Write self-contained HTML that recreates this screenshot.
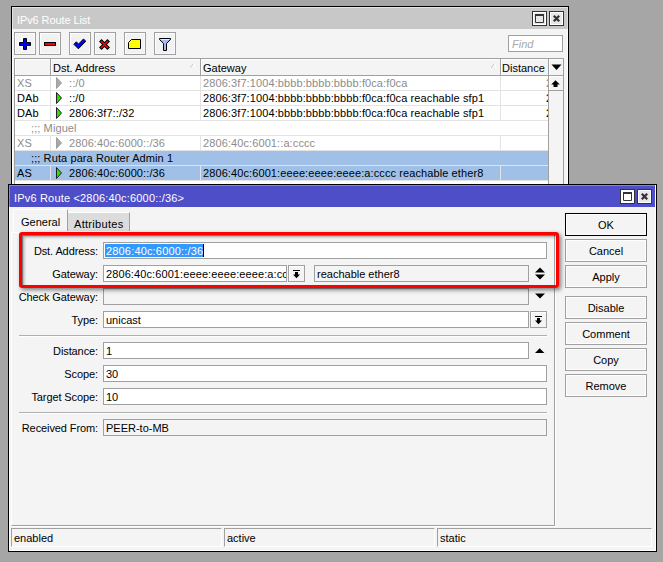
<!DOCTYPE html>
<html><head><meta charset="utf-8">
<style>
*{box-sizing:border-box;margin:0;padding:0}
html,body{width:663px;height:562px;overflow:hidden;background:#a6a6a6}
body{position:relative;font-family:"Liberation Sans",sans-serif;font-size:11px;color:#000}
.a{position:absolute}
.t{position:absolute;white-space:nowrap;line-height:13px}
#w1{left:11px;top:6px;width:558px;height:190px;border:1px solid #000;background:#f4f4f4;box-shadow:inset -1px 0 0 #fff,inset 1px 0 0 #fff}
.tbtn{position:absolute;width:15px;height:15px;border:1px solid #333;background:#e8e6e8;box-shadow:inset 1px 1px 0 #fff,inset -1px -1px 0 #fff}
.tb{position:absolute;top:32px;width:22px;height:23px;border:1px solid #a0a0a0;background:#f2f2f2;box-shadow:inset 1px 1px 0 #fff,inset -1px -1px 0 #fafafa}
.tb svg{position:absolute;left:-1px;top:-1px}
#tbl{left:14px;top:58px;width:550px;height:130px;border:1px solid #a0a0a0;border-bottom:none;border-right:none;background:#fff;overflow:hidden}
.hdr{position:absolute;top:0;height:17px;background:#f4f4f4;box-shadow:inset 1px 1px 0 #fff;border-right:1px solid #a0a0a0;border-bottom:1px solid #a0a0a0}
.row{position:absolute;left:0;width:534px;height:15px;border-bottom:1px solid #e3e3e3;letter-spacing:0.1px}
.cell{position:absolute;top:0;height:15px;border-right:1px solid #e3e3e3}
.gr{color:#8c8c8c}
.sel{background:#a0c0e8}
#w2{left:8px;top:184px;width:649px;height:368px;border:1px solid #000;background:#f4f4f4}
.inp{position:absolute;height:17px;border:1px solid #a0a0a0;background:#fff;overflow:hidden}
.dis{background:#f4f4f4}
.lbl{position:absolute;text-align:right;width:100px;white-space:nowrap;line-height:13px;letter-spacing:-0.1px}
.btn{position:absolute;left:565px;width:82px;height:23px;border:1px solid #a0a0a0;background:#f4f4f4;text-align:center;line-height:23px;box-shadow:inset 1px 1px 0 #fff,inset -1px -1px 0 #fff}
.sep{position:absolute;left:19px;width:528px;height:2px;border-top:1px solid #b0b0b0;border-bottom:1px solid #fff}
.sb{position:absolute;top:528px;height:19px;border-top:1px solid #a0a0a0;border-left:1px solid #a0a0a0;border-right:1px solid #fff;border-bottom:1px solid #fff}
</style></head><body>
<div id="w1" class="a"></div>
<div class="a" style="left:12px;top:7px;width:556px;height:22px;background:#c8c8c8;box-shadow:inset 1px 1px 0 #e4e4e4,inset -1px 0 0 #dcdcdc"></div>
<span class="t" style="left:17px;top:14px;color:#fff;letter-spacing:-0.1px">IPv6 Route List</span>
<div class="tbtn" style="left:532px;top:11px"><svg class="a" style="left:-1px;top:-1px" width="15" height="15"><path d="M3.5 4V11.5H11.5V4" fill="#e8e6e8" stroke="#333"/><rect x="3" y="3" width="9" height="2" fill="#333"/></svg></div>
<div class="tbtn" style="left:549px;top:11px"><svg class="a" style="left:-1px;top:-1px" width="15" height="15"><path d="M4.8 4.8L10.2 10.2M10.2 4.8L4.8 10.2" stroke="#333" stroke-width="2.3"/></svg></div>
<div class="tb" style="left:14px"><svg width="22" height="23"><path d="M8.5 6.5H11.5V10.5H15.5V13.5H11.5V17.5H8.5V13.5H4.5V10.5H8.5Z" fill="#fff" stroke="#fff" stroke-width="3" stroke-linejoin="round"/><path d="M9.5 6.5H12.5V10.5H16.5V13.5H12.5V17.5H9.5V13.5H5.5V10.5H9.5Z" fill="#00f" stroke="#000"/></svg></div>
<div class="tb" style="left:39px"><svg width="22" height="23"><rect x="5.5" y="10.5" width="11" height="3" fill="#f00" stroke="#000"/></svg></div>
<div class="tb" style="left:69px"><svg width="22" height="23"><path d="M4.9 12.3L7.4 9.8L9.4 12.2L14.5 7L16.8 9.2L9.4 16.8Z" fill="#00f" stroke="#000" stroke-width="1" stroke-linejoin="miter"/></svg></div>
<div class="tb" style="left:94px"><svg width="22" height="23"><path d="M6.3 8.3L14.7 16.7M14.7 8.3L6.3 16.7" stroke="#000" stroke-width="3.6"/><path d="M7 9L14 16M14 9L7 16" stroke="#f00" stroke-width="1.7"/></svg></div>
<div class="tb" style="left:124px"><svg width="22" height="23"><path d="M4.5 10.5L7.5 7.5H16.5V16.5H4.5Z" fill="#ff0" stroke="#000"/><path d="M10 9.5h2M13 9.5h2M6 11.5h3M10 11.5h2M13 11.5h2" stroke="#d8d8e8" stroke-width="1"/></svg></div>
<div class="tb" style="left:154px"><svg width="22" height="23"><path d="M5.5 6.5H16.5V7.5L12.5 11.5V18.5H9.5V11.5L5.5 7.5Z" fill="#a8b8f0" stroke="#000"/><path d="M7 7.5H15" stroke="#e8ecff"/></svg></div>
<div class="inp" style="left:508px;top:35px;width:55px;height:17px"><span class="t" style="left:3px;top:2px;color:#a8a8a8;font-style:italic">Find</span></div>
<div id="tbl" class="a"><div class="hdr" style="left:0;width:36px"></div>
<div class="hdr" style="left:36px;width:150px"><span class="t" style="left:2px;top:3px">Dst. Address</span><svg class="a" style="left:138px;top:4px" width="7" height="6"><path d="M0.5 5.5L4 0.5L6.5 5.5" fill="none" stroke="#fff"/><path d="M1 5L4 0.8" stroke="#c8c8c8"/></svg></div>
<div class="hdr" style="left:186px;width:300px"><span class="t" style="left:2px;top:3px">Gateway</span><svg class="a" style="left:289px;top:4px" width="7" height="6"><path d="M0.5 5.5L4 0.5L6.5 5.5" fill="none" stroke="#fff"/><path d="M1 5L4 0.8" stroke="#c8c8c8"/></svg></div>
<div class="hdr" style="left:486px;width:48px"><span class="t" style="left:1px;top:3px">Distance</span></div>
<div class="hdr" style="left:534px;width:15px"><svg class="a" style="left:2px;top:5px" width="11" height="7"><path d="M0.5 0.5H10.5L5.5 6z" fill="#000"/></svg></div>
<div class="row gr" style="top:17px"><div class="cell" style="left:0;width:36px"><span class="t" style="left:2px;top:1px">XS</span></div><div class="cell" style="left:36px;width:150px"><svg class="a" style="left:0;top:0" width="14" height="15"><path d="M5.5 1.5L10.5 7L5.5 12.5Z" fill="#a8a8a8" stroke="#a0a0a0"/></svg><span class="t" style="left:18px;top:1px">::/0</span></div><div class="cell" style="left:186px;width:300px;overflow:hidden"><span class="t" style="left:2px;top:1px">2806:3f7:1004:bbbb:bbbb:bbbb:f0ca:f0ca</span></div><div class="cell" style="left:486px;width:48px;overflow:hidden"><span class="t" style="left:45px;top:1px">2</span></div></div>
<div class="row" style="top:32px"><div class="cell" style="left:0;width:36px"><span class="t" style="left:2px;top:1px">DAb</span></div><div class="cell" style="left:36px;width:150px"><svg class="a" style="left:0;top:0" width="14" height="15"><path d="M5.5 1.5L10.5 7L5.5 12.5Z" fill="#33dd00" stroke="#222"/></svg><span class="t" style="left:18px;top:1px">::/0</span></div><div class="cell" style="left:186px;width:300px;overflow:hidden"><span class="t" style="left:2px;top:1px">2806:3f7:1004:bbbb:bbbb:bbbb:f0ca:f0ca reachable sfp1</span></div><div class="cell" style="left:486px;width:48px;overflow:hidden"><span class="t" style="left:45px;top:1px">2</span></div></div>
<div class="row" style="top:47px"><div class="cell" style="left:0;width:36px"><span class="t" style="left:2px;top:1px">DAb</span></div><div class="cell" style="left:36px;width:150px"><svg class="a" style="left:0;top:0" width="14" height="15"><path d="M5.5 1.5L10.5 7L5.5 12.5Z" fill="#33dd00" stroke="#222"/></svg><span class="t" style="left:18px;top:1px">2806:3f7::/32</span></div><div class="cell" style="left:186px;width:300px;overflow:hidden"><span class="t" style="left:2px;top:1px">2806:3f7:1004:bbbb:bbbb:bbbb:f0ca:f0ca reachable sfp1</span></div><div class="cell" style="left:486px;width:48px;overflow:hidden"><span class="t" style="left:45px;top:1px">2</span></div></div>
<div class="row gr" style="top:62px"><span class="t" style="left:16px;top:1px">;;; Miguel</span></div>
<div class="row gr" style="top:77px"><div class="cell" style="left:0;width:36px"><span class="t" style="left:2px;top:1px">XS</span></div><div class="cell" style="left:36px;width:150px"><svg class="a" style="left:0;top:0" width="14" height="15"><path d="M5.5 1.5L10.5 7L5.5 12.5Z" fill="#a8a8a8" stroke="#a0a0a0"/></svg><span class="t" style="left:18px;top:1px">2806:40c:6000::/36</span></div><div class="cell" style="left:186px;width:300px;overflow:hidden"><span class="t" style="left:2px;top:1px">2806:40c:6001::a:cccc</span></div><div class="cell" style="left:486px;width:48px;overflow:hidden"></div></div>
<div class="row sel" style="top:92px"><span class="t" style="left:16px;top:1px">;;; Ruta para Router Admin 1</span></div>
<div class="row sel" style="top:107px"><div class="cell" style="left:0;width:36px"><span class="t" style="left:2px;top:1px">AS</span></div><div class="cell" style="left:36px;width:150px"><svg class="a" style="left:0;top:0" width="14" height="15"><path d="M5.5 1.5L10.5 7L5.5 12.5Z" fill="#33dd00" stroke="#222"/></svg><span class="t" style="left:18px;top:1px">2806:40c:6000::/36</span></div><div class="cell" style="left:186px;width:300px;overflow:hidden"><span class="t" style="left:2px;top:1px">2806:40c:6001:eeee:eeee:eeee:a:cccc reachable ether8</span></div><div class="cell" style="left:486px;width:48px;overflow:hidden"></div></div>
<div class="a" style="left:533px;top:17px;width:16px;height:200px;background:#f4f4f4;border-left:1px solid #a0a0a0;border-right:1px solid #a0a0a0"></div>
<div class="a" style="left:534px;top:17px;width:15px;height:15px;border-bottom:1px solid #a0a0a0;border-right:1px solid #a0a0a0;background:#f4f4f4;box-shadow:inset 1px 1px 0 #fff"><svg class="a" style="left:2px;top:4px" width="10" height="7"><path d="M4.5 0.3L8.8 4.4H6.5V7H2.5V4.4H0.2z" fill="#000"/></svg></div></div>
<div id="w2" class="a"></div>
<div class="a" style="left:9px;top:185px;width:646px;height:22px;background:#4e4ec8;box-shadow:inset 1px 1px 0 #8484e4"></div>
<span class="t" style="left:14px;top:192px;color:#fff;letter-spacing:0.18px">IPv6 Route &lt;2806:40c:6000::/36&gt;</span>
<div class="tbtn" style="left:620px;top:189px;background:#fff"><svg class="a" style="left:-1px;top:-1px" width="15" height="15"><path d="M3.5 4V11.5H11.5V4" fill="#fff" stroke="#333"/><rect x="3" y="3" width="9" height="2" fill="#333"/></svg></div>
<div class="tbtn" style="left:637px;top:189px"><svg class="a" style="left:-1px;top:-1px" width="15" height="15"><path d="M4.8 4.8L10.2 10.2M10.2 4.8L4.8 10.2" stroke="#333" stroke-width="2.3"/></svg></div>
<div class="a" style="left:9px;top:207px;width:1px;height:344px;background:#fff"></div>
<div class="a" style="left:655px;top:185px;width:1px;height:366px;background:#fff"></div>
<div class="a" style="left:9px;top:550px;width:647px;height:1px;background:#fff"></div>
<div class="a" style="left:11px;top:232px;width:544px;height:294px;border-left:1px solid #fff;border-top:1px solid #fff;border-right:1px solid #a0a0a0;border-bottom:1px solid #a0a0a0;box-shadow:1px 1px 0 #fff"></div>
<div class="a" style="left:68px;top:212px;width:62px;height:19px;background:#dcdcdc;border-top:1px solid #fff;border-right:1px solid #a0a0a0"><span class="t" style="left:6px;top:5px;letter-spacing:0.3px">Attributes</span></div>
<div class="a" style="left:13px;top:209px;width:55px;height:22px;background:#f4f4f4;border-left:1px solid #fff;border-top:1px solid #fff;border-right:1px solid #a0a0a0"><span class="t" style="left:7px;top:6px">General</span></div>
<span class="lbl" style="left:-2px;top:245px">Dst. Address:</span>
<span class="lbl" style="left:-2px;top:268px">Gateway:</span>
<span class="lbl" style="left:-2px;top:291px">Check Gateway:</span>
<span class="lbl" style="left:-2px;top:314px">Type:</span>
<span class="lbl" style="left:-2px;top:345px">Distance:</span>
<span class="lbl" style="left:-2px;top:368px">Scope:</span>
<span class="lbl" style="left:-2px;top:391px">Target Scope:</span>
<span class="lbl" style="left:-2px;top:422px">Received From:</span>
<div class="inp" style="left:103px;top:242px;width:444px"><span class="a" style="left:1px;top:1px;width:98px;height:13px;background:#3399ff"></span><span class="t" style="left:2px;top:2px;color:#fff;letter-spacing:0.17px">2806:40c:6000::/36</span><span class="a" style="left:99px;top:1px;width:1px;height:13px;background:#000"></span></div>
<div class="inp" style="left:103px;top:265px;width:184px"><span class="t" style="left:2px;top:2px;letter-spacing:0.1px">2806:40c:6001:eeee:eeee:eeee:a:cccc</span></div>
<div class="a" style="left:288px;top:265px;width:17px;height:17px;border:1px solid #a0a0a0;background:#f4f4f4;box-shadow:inset 1px 1px 0 #fff"><svg class="a" style="left:3px;top:3px" width="10" height="10"><path d="M1 1.5H8" stroke="#000" stroke-width="1"/><path d="M3 3H6V5.5H8L4.5 9.2L1 5.5H3Z" fill="#000"/></svg></div>
<div class="inp dis" style="left:314px;top:265px;width:215px"><span class="t" style="left:2px;top:2px">reachable ether8</span></div>
<svg class="a" style="left:534px;top:267px" width="12" height="13"><path d="M1 5.5L6 0.5L11 5.5z M1 7.5L6 12.5L11 7.5z" fill="#000"/></svg>
<div class="inp dis" style="left:103px;top:288px;width:426px"></div>
<svg class="a" style="left:534px;top:293px" width="12" height="7"><path d="M1 0.5H11L6 5.5z" fill="#000"/></svg>
<div class="inp" style="left:103px;top:311px;width:426px"><span class="t" style="left:2px;top:2px">unicast</span></div>
<div class="a" style="left:530px;top:311px;width:17px;height:17px;border:1px solid #a0a0a0;background:#f4f4f4;box-shadow:inset 1px 1px 0 #fff"><svg class="a" style="left:3px;top:3px" width="10" height="10"><path d="M1 1.5H8" stroke="#000" stroke-width="1"/><path d="M3 3H6V5.5H8L4.5 9.2L1 5.5H3Z" fill="#000"/></svg></div>
<div class="sep" style="top:335px"></div>
<div class="inp" style="left:103px;top:342px;width:426px"><span class="t" style="left:2px;top:2px">1</span></div>
<svg class="a" style="left:534px;top:347px" width="12" height="8"><path d="M1 6H10.4L5.7 1.2z" fill="#000"/></svg>
<div class="inp" style="left:103px;top:365px;width:444px"><span class="t" style="left:2px;top:2px">30</span></div>
<div class="inp" style="left:103px;top:388px;width:444px"><span class="t" style="left:2px;top:2px">10</span></div>
<div class="sep" style="top:412px"></div>
<div class="inp dis" style="left:103px;top:419px;width:444px"><span class="t" style="left:2px;top:2px">PEER-to-MB</span></div>
<div class="btn" style="top:213px;border-color:#000;">OK</div>
<div class="btn" style="top:239px;">Cancel</div>
<div class="btn" style="top:265px;">Apply</div>
<div class="btn" style="top:296px;">Disable</div>
<div class="btn" style="top:322px;">Comment</div>
<div class="btn" style="top:348px;">Copy</div>
<div class="btn" style="top:374px;">Remove</div>
<div class="sb" style="left:11px;width:211px"><span class="t" style="left:2px;top:3px">enabled</span></div>
<div class="sb" style="left:224px;width:211px"><span class="t" style="left:2px;top:3px">active</span></div>
<div class="sb" style="left:437px;width:215px"><span class="t" style="left:2px;top:3px">static</span></div>
<div class="a" style="left:19px;top:232px;width:540px;height:56px;border:3px solid #f00;border-radius:3px;box-shadow:2px 2px 4px rgba(0,0,0,.5), inset 1px 1px 0 rgba(0,0,0,.3), inset 2px 2px 3px rgba(0,0,0,.35)"></div>
</body></html>
